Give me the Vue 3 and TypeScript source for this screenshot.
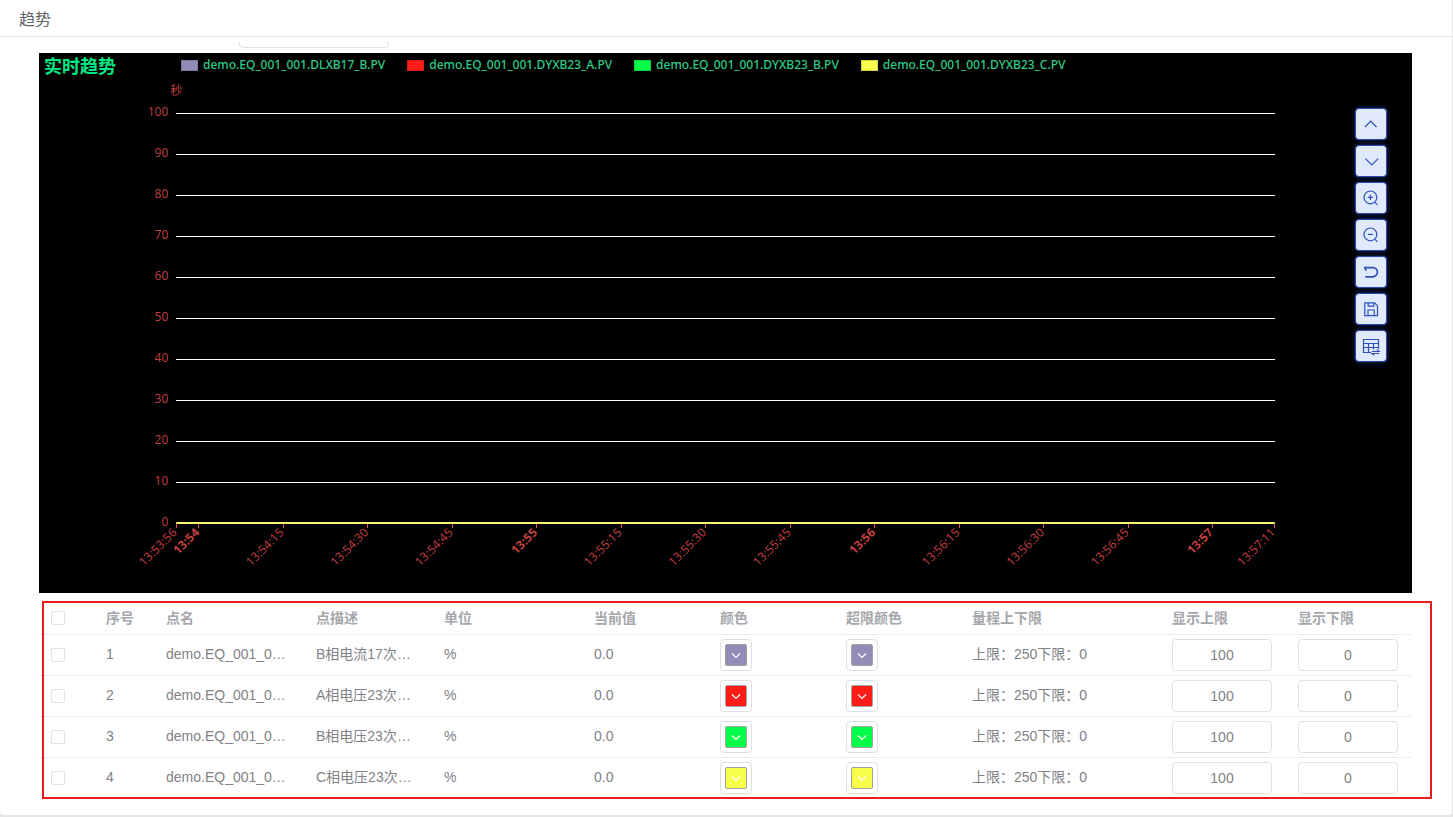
<script setup lang="ts">
interface Series {
  name: string
  shortName: string
  desc: string
  color: string
}

interface Tick {
  label: string
  seconds: number
  major?: boolean
}

const series: Series[] = [
  { name: 'demo.EQ_001_001.DLXB17_B.PV', shortName: 'demo.EQ_001_0…', desc: 'B相电流17次…', color: '#928cb8' },
  { name: 'demo.EQ_001_001.DYXB23_A.PV', shortName: 'demo.EQ_001_0…', desc: 'A相电压23次…', color: '#ff1d1a' },
  { name: 'demo.EQ_001_001.DYXB23_B.PV', shortName: 'demo.EQ_001_0…', desc: 'B相电压23次…', color: '#00ff47' },
  { name: 'demo.EQ_001_001.DYXB23_C.PV', shortName: 'demo.EQ_001_0…', desc: 'C相电压23次…', color: '#f8ff4a' },
]

const columns = ['序号', '点名', '点描述', '单位', '当前值', '颜色', '超限颜色', '量程上下限', '显示上限', '显示下限']

const ticks: Tick[] = [
  { label: '13:53:56', seconds: 0 },
  { label: '13:54', seconds: 4, major: true },
  { label: '13:54:15', seconds: 19 },
  { label: '13:54:30', seconds: 34 },
  { label: '13:54:45', seconds: 49 },
  { label: '13:55', seconds: 64, major: true },
  { label: '13:55:15', seconds: 79 },
  { label: '13:55:30', seconds: 94 },
  { label: '13:55:45', seconds: 109 },
  { label: '13:56', seconds: 124, major: true },
  { label: '13:56:15', seconds: 139 },
  { label: '13:56:30', seconds: 154 },
  { label: '13:56:45', seconds: 169 },
  { label: '13:57', seconds: 184, major: true },
  { label: '13:57:11', seconds: 195 },
]

const levels = [100, 90, 80, 70, 60, 50, 40, 30, 20, 10, 0]
const span = 195
const plotBottom = 470
const stepHeight = 41

const levelY = (value: number): number => plotBottom - (value / 10) * stepHeight
const tickX = (seconds: number): string => `${10 + (seconds / span) * 80}%`

const tools = [
  { label: '上移', paths: ['M2 11 7.7 5.2 13.5 11'] },
  { label: '下移', paths: ['M2.4 5.6 8.8 12 15.2 5.6'] },
  { label: '放大', paths: ['M13.8 7.4a6.4 6.4 0 1 1-12.8 0a6.4 6.4 0 1 1 12.8 0', 'M11.8 12.2 14.4 14.8', 'M4.8 7.4h5.2M7.4 4.8v5.2'] },
  { label: '缩小', paths: ['M13.8 7.4a6.4 6.4 0 1 1-12.8 0a6.4 6.4 0 1 1 12.8 0', 'M11.8 12.2 14.4 14.8', 'M4.8 7.4h5.2'] },
  { label: '还原', bold: true, paths: ['M2 3.6H9.8a4.6 4.6 0 0 1 0 9.2H2.2', 'M1.6 2.8 3.2 6.6'] },
  { label: '保存', paths: ['M1.8 1.8h9.8l2.9 2.9v9.9H1.8z', 'M5.2 1.8v3.4h5.6V1.8', 'M5 14.6V9h6.2v5.6'] },
  { label: '表格', paths: ['M8 14.5H.5V1.5h15V11', 'M.5 5.5h15M.5 9.5h15M5.5 5.5v9M10.5 5.5v6', 'M8.8 13.5h7.4l-2.2-1.9M16.2 15.5H9l2.2 1.9'] },
]
</script>

<template>
  <main class="card">
    <header class="card-header">趋势</header>
    <section class="content">
      <div class="filter">
        <input class="filter-input" type="text" aria-label="筛选" />
      </div>

      <div class="chart">
        <div class="chart-head">
          <h1 class="chart-title">实时趋势</h1>
          <ul class="legend">
            <li v-for="item in series" :key="item.name" class="legend-item">
              <span class="legend-mark" :style="{ background: item.color }"></span>{{ item.name }}
            </li>
          </ul>
        </div>
        <svg class="plot" role="img" aria-label="实时趋势">
          <svg x="10%" y="42" class="spot"><text class="axis-text" text-anchor="middle">秒</text></svg>
          <g v-for="value in levels" :key="value">
            <line class="grid-line" x1="10%" x2="90%" :y1="levelY(value)" :y2="levelY(value)" />
            <svg x="10%" :y="levelY(value)" class="spot">
              <text class="axis-text" x="-8" y="3" text-anchor="end">{{ value }}</text>
            </svg>
          </g>
          <svg v-for="tick in ticks" :key="tick.label" :x="tickX(tick.seconds)" :y="plotBottom" class="spot">
            <line class="tick" y1="0" y2="5" />
            <text class="axis-text" :class="{ major: tick.major }" text-anchor="end" transform="translate(-3 6) rotate(-45)" y="6">{{ tick.label }}</text>
          </svg>
          <line class="series-line" x1="10%" x2="90%" :y1="plotBottom" :y2="plotBottom" />
        </svg>
        <div class="tools">
          <button v-for="tool in tools" :key="tool.label" type="button" class="tool" :class="{ bold: tool.bold }" :aria-label="tool.label">
            <svg viewBox="0 0 16 16" width="16" height="16"><path v-for="d in tool.paths" :key="d" :d="d" /></svg>
          </button>
        </div>
      </div>

      <div class="table-wrap">
        <table class="points">
          <colgroup>
            <col class="w-check" /><col class="w-index" /><col class="w-name" /><col class="w-desc" /><col class="w-unit" />
            <col /><col /><col /><col class="w-range" /><col /><col />
          </colgroup>
          <thead>
            <tr>
              <th><input type="checkbox" aria-label="全选" /></th>
              <th v-for="column in columns" :key="column">{{ column }}</th>
            </tr>
          </thead>
          <tbody>
            <tr v-for="(item, index) in series" :key="item.name">
              <td><input type="checkbox" :aria-label="`选择 ${index + 1}`" /></td>
              <td class="text">{{ index + 1 }}</td>
              <td class="text">{{ item.shortName }}</td>
              <td class="text">{{ item.desc }}</td>
              <td class="text">%</td>
              <td class="text">0.0</td>
              <td v-for="kind in ['颜色', '超限颜色']" :key="kind">
                <button type="button" class="picker" :aria-label="kind">
                  <span class="swatch" :style="{ background: item.color }">
                    <svg viewBox="0 0 12 12" width="12" height="12"><path d="M2 4.5 6 8.5 10 4.5" /></svg>
                  </span>
                </button>
              </td>
              <td class="text">上限：250下限：0</td>
              <td><input class="limit" type="text" value="100" aria-label="显示上限" /></td>
              <td><input class="limit" type="text" value="0" aria-label="显示下限" /></td>
            </tr>
          </tbody>
        </table>
        <div class="highlight"></div>
      </div>
    </section>
  </main>
</template>

<style>
body {
  background: #e6e6e6;
}
</style>

<style scoped>
* {
  box-sizing: border-box;
}

.card {
  margin-right: 1px;
  padding-bottom: 16px;
  background: #fff;
  border-radius: 0 0 4px 4px;
  color: #808286;
  font: 14px/20px "Liberation Sans", "Noto Sans CJK SC", sans-serif;
}

.card-header {
  height: 37px;
  padding: 0 19px;
  border-bottom: 1px solid #e6e6e6;
  color: #606266;
  font-size: 16px;
  line-height: 40px;
}

.content {
  padding: 5px 40px 0 39px;
}

.filter {
  display: flex;
  align-items: flex-end;
  height: 6px;
  margin: 0 0 5px 200px;
  overflow: hidden;
}

.filter-input {
  width: 150px;
  height: 32px;
  border: 1px solid #dcdfe6;
  border-radius: 4px;
}

.chart {
  position: relative;
  height: 540px;
  background: #000;
}

.chart-head {
  display: flex;
  gap: 65px;
  height: 24px;
  padding-left: 5px;
  align-items: center;
}

.chart-title {
  margin: 0;
  color: #00e985;
  font: bold 18px/24px "Noto Sans CJK SC", sans-serif;
}

.legend {
  display: flex;
  gap: 22px;
  margin: 0;
  padding: 0;
  list-style: none;
  color: #2ecb86;
  font: 500 12px/24px "Noto Sans", sans-serif;
}

.legend-item {
  display: flex;
  align-items: center;
  gap: 5px;
  white-space: nowrap;
}

.legend-mark {
  width: 17px;
  height: 11px;
  border: 1px solid rgba(0, 0, 0, 0.15);
}

.plot {
  display: block;
  width: 100%;
  height: 540px;
  margin-top: -24px;
}

.spot {
  overflow: visible;
}

.axis-text {
  fill: #c23f40;
  font: 12px "Open Sans", "Noto Sans CJK SC", sans-serif;
}

.axis-text.major {
  font-weight: bold;
}

.grid-line {
  stroke: #fff;
  shape-rendering: crispEdges;
}

.tick {
  stroke: #d5574a;
  shape-rendering: crispEdges;
}

.series-line {
  stroke: #f9f871;
  stroke-width: 2;
}

.tools {
  position: absolute;
  top: 55px;
  right: 25px;
  display: grid;
  gap: 5px;
}

.tool {
  display: grid;
  place-items: center;
  width: 32px;
  height: 32px;
  padding: 0;
  border: 1px solid #2c48b4;
  border-radius: 4px;
  background: #e1eafd;
  box-shadow: 0 0 4px #1c2d74;
}

.tool svg {
  overflow: visible;
}

.tool path {
  fill: none;
  stroke: #2f50b8;
  stroke-width: 1.2;
}

.tool.bold path {
  stroke-width: 1.7;
}

.table-wrap {
  position: relative;
  padding-top: 9px;
}

.points {
  width: 100%;
  table-layout: fixed;
  border-collapse: separate;
  border-spacing: 0;
}

.w-check { width: 55px; }
.w-index { width: 60px; }
.w-name,
.w-unit { width: 150px; }
.w-desc { width: 128px; }
.w-range { width: 200px; }

th,
td {
  padding: 0 12px;
  border-bottom: 1px solid #ebeef0;
  text-align: left;
  vertical-align: middle;
  white-space: nowrap;
}

th {
  height: 33px;
  color: #a5a7ab;
}

td {
  height: 41px;
}

td.text {
  padding-bottom: 2px;
}

input[type="checkbox"] {
  display: block;
  appearance: none;
  width: 14px;
  height: 14px;
  margin: 0;
  border: 1px solid #dfe1e5;
  border-radius: 2px;
  background: #fff;
}

.picker {
  display: grid;
  place-items: center;
  width: 32px;
  height: 32px;
  padding: 0;
  border: 1px solid #dcdfe4;
  border-radius: 4px;
  background: #fff;
}

.swatch {
  display: grid;
  place-items: center;
  width: 22px;
  height: 22px;
  border: 1px solid #a0a09c;
  border-radius: 2px;
}

.swatch path {
  fill: none;
  stroke: #fff;
  stroke-width: 1.2;
}

.limit {
  display: block;
  width: 100px;
  height: 32px;
  padding: 0 11px;
  border: 1px solid #dfe1e5;
  border-radius: 4px;
  background: #fff;
  color: #808286;
  font: inherit;
  text-align: center;
}

.highlight {
  position: absolute;
  inset: 8px -20px 0 3px;
  border: 2px solid #e91c1c;
  pointer-events: none;
}
</style>
